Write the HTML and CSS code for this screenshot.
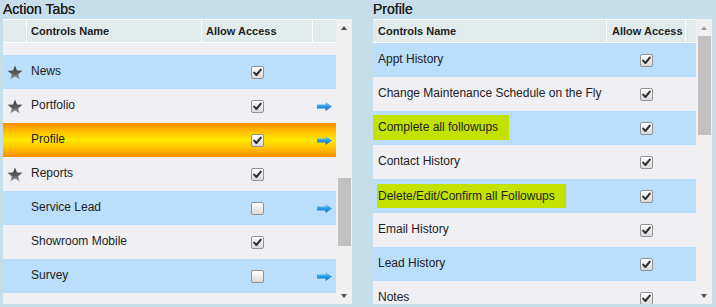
FILE: index.html
```html
<!DOCTYPE html>
<html lang="en">
<head>
  <meta charset="UTF-8">
  <title>Action Tabs - Profile Access</title>
  <link rel="stylesheet" href="styles.css">
</head>
<body>
  <svg width="0" height="0" class="defs">
    <defs>
      <linearGradient id="starGrad" x1="0" y1="0" x2="0" y2="1">
        <stop offset="0" stop-color="#3f3f3f"/>
        <stop offset="0.55" stop-color="#5a5a5a"/>
        <stop offset="1" stop-color="#a9a9a9"/>
      </linearGradient>
      <linearGradient id="arrowGrad" x1="0" y1="0" x2="0" y2="1">
        <stop offset="0" stop-color="#8fd0f8"/>
        <stop offset="0.5" stop-color="#2a9be8"/>
        <stop offset="1" stop-color="#0f62b8"/>
      </linearGradient>
      <symbol id="star" viewBox="0 0 16 15">
        <path d="M8 0.5 L10 5.6 L15.5 5.8 L11.2 9.2 L12.7 14.5 L8 11.5 L3.3 14.5 L4.8 9.2 L0.5 5.8 L6 5.6 Z" fill="url(#starGrad)"/>
      </symbol>
      <symbol id="arrow" viewBox="0 0 15 9">
        <path d="M0 2.6 H8.5 V0 L15 4.5 L8.5 9 V6.4 H0 Z" fill="url(#arrowGrad)"/>
      </symbol>
      <symbol id="tick" viewBox="0 0 13 13">
        <path d="M3.2 6.6 L5.4 9 L9.8 3.6" fill="none" stroke="#333" stroke-width="2.1" stroke-linecap="round" stroke-linejoin="round"/>
      </symbol>
    </defs>
  </svg>

  <div class="page">
    <!-- Action Tabs -->
    <section class="panel panel-left">
      <h2 class="title">Action Tabs</h2>
      <div class="grid">
        <div class="grid-main">
          <div class="head cols-left">
            <div class="hcell"></div>
            <div class="hcell">Controls Name</div>
            <div class="hcell">Allow Access</div>
            <div class="hcell"></div>
          </div>
          <div class="body">
            <div class="spacer"></div>
            <div class="row cols-left blue">
              <div class="cell icon"><svg class="star"><use href="#star"/></svg></div>
              <div class="cell name">News</div>
              <div class="cell chk"><span class="box checked"><svg><use href="#tick"/></svg></span></div>
              <div class="cell icon"></div>
            </div>
            <div class="row cols-left">
              <div class="cell icon"><svg class="star"><use href="#star"/></svg></div>
              <div class="cell name">Portfolio</div>
              <div class="cell chk"><span class="box checked"><svg><use href="#tick"/></svg></span></div>
              <div class="cell icon"><svg class="arrow"><use href="#arrow"/></svg></div>
            </div>
            <div class="row cols-left selected">
              <div class="cell icon"></div>
              <div class="cell name">Profile</div>
              <div class="cell chk"><span class="box checked"><svg><use href="#tick"/></svg></span></div>
              <div class="cell icon"><svg class="arrow"><use href="#arrow"/></svg></div>
            </div>
            <div class="row cols-left">
              <div class="cell icon"><svg class="star"><use href="#star"/></svg></div>
              <div class="cell name">Reports</div>
              <div class="cell chk"><span class="box checked"><svg><use href="#tick"/></svg></span></div>
              <div class="cell icon"></div>
            </div>
            <div class="row cols-left blue">
              <div class="cell icon"></div>
              <div class="cell name">Service Lead</div>
              <div class="cell chk"><span class="box"></span></div>
              <div class="cell icon"><svg class="arrow"><use href="#arrow"/></svg></div>
            </div>
            <div class="row cols-left">
              <div class="cell icon"></div>
              <div class="cell name">Showroom Mobile</div>
              <div class="cell chk"><span class="box checked"><svg><use href="#tick"/></svg></span></div>
              <div class="cell icon"></div>
            </div>
            <div class="row cols-left blue">
              <div class="cell icon"></div>
              <div class="cell name">Survey</div>
              <div class="cell chk"><span class="box"></span></div>
              <div class="cell icon"><svg class="arrow"><use href="#arrow"/></svg></div>
            </div>
            <div class="row cols-left">
              <div class="cell icon"></div>
              <div class="cell name"></div>
              <div class="cell chk"><span class="box"></span></div>
              <div class="cell icon"></div>
            </div>
          </div>
        </div>
        <div class="vscroll">
          <div class="sbtn"><span class="tri up"></span></div>
          <div class="track"><div class="thumb thumb-left"></div></div>
          <div class="sbtn"><span class="tri down"></span></div>
        </div>
      </div>
    </section>

    <!-- Profile -->
    <section class="panel panel-right">
      <h2 class="title">Profile</h2>
      <div class="grid">
        <div class="grid-main">
          <div class="head cols-right">
            <div class="hcell">Controls Name</div>
            <div class="hcell">Allow Access</div>
            <div class="hcell"></div>
          </div>
          <div class="body">
            <div class="row cols-right blue">
              <div class="cell name">Appt History</div>
              <div class="cell chk"><span class="box checked"><svg><use href="#tick"/></svg></span></div>
              <div class="cell"></div>
            </div>
            <div class="row cols-right">
              <div class="cell name">Change Maintenance Schedule on the Fly</div>
              <div class="cell chk"><span class="box checked"><svg><use href="#tick"/></svg></span></div>
              <div class="cell"></div>
            </div>
            <div class="row cols-right blue">
              <div class="cell name"><span class="hl">Complete all followups</span></div>
              <div class="cell chk"><span class="box checked"><svg><use href="#tick"/></svg></span></div>
              <div class="cell"></div>
            </div>
            <div class="row cols-right">
              <div class="cell name">Contact History</div>
              <div class="cell chk"><span class="box checked"><svg><use href="#tick"/></svg></span></div>
              <div class="cell"></div>
            </div>
            <div class="row cols-right blue">
              <div class="cell name"><span class="hl hl-tight">Delete/Edit/Confirm all Followups</span></div>
              <div class="cell chk"><span class="box checked"><svg><use href="#tick"/></svg></span></div>
              <div class="cell"></div>
            </div>
            <div class="row cols-right">
              <div class="cell name">Email History</div>
              <div class="cell chk"><span class="box checked"><svg><use href="#tick"/></svg></span></div>
              <div class="cell"></div>
            </div>
            <div class="row cols-right blue">
              <div class="cell name">Lead History</div>
              <div class="cell chk"><span class="box checked"><svg><use href="#tick"/></svg></span></div>
              <div class="cell"></div>
            </div>
            <div class="row cols-right">
              <div class="cell name">Notes</div>
              <div class="cell chk"><span class="box checked"><svg><use href="#tick"/></svg></span></div>
              <div class="cell"></div>
            </div>
          </div>
        </div>
        <div class="vscroll">
          <div class="sbtn"><span class="tri up off"></span></div>
          <div class="track"><div class="thumb thumb-right"></div></div>
          <div class="sbtn"><span class="tri down"></span></div>
        </div>
      </div>
    </section>
  </div>
</body>
</html>
```

FILE: styles.css
```css
/* reset */
* { margin: 0; padding: 0; box-sizing: border-box; }
html, body { width: 100%; height: 100%; overflow: hidden; }
body {
  background: #c6deea;
  font-family: "Liberation Sans", Arial, sans-serif;
  color: #222;
}
.defs { position: absolute; }

.page {
  display: flex;
  align-items: flex-start;
}

/* panels */
.panel-left { width: 349px; margin-left: 3px; }
.panel-right { width: 339px; margin-left: 21px; }

.title {
  font-size: 14px;
  font-weight: normal;
  line-height: 19px;
  height: 19px;
  color: #1f1f1f;
  text-shadow: 0 0 0.4px #1f1f1f;
}

.grid {
  display: flex;
  height: 285px;
  background: #f0f0f3;
}
.grid-main {
  flex: 1;
  display: flex;
  flex-direction: column;
  min-width: 0;
}

/* column layouts */
.cols-left { display: grid; grid-template-columns: 24px 175px 111px 23px; }
.cols-right { display: grid; grid-template-columns: 234px 79px 10px; }

/* header */
.head {
  height: 24px;
  background: #e1ebeb;
  border-top: 1px solid #fff;
  border-bottom: 1px solid #fff;
}
.hcell {
  border-right: 1px solid #fff;
  font-size: 11px;
  font-weight: bold;
  line-height: 22px;
  padding-left: 4px;
  white-space: nowrap;
}
.cols-right .hcell { padding-left: 5px; }
.hcell:last-child { border-right: none; }

/* body rows */
.body {
  flex: 1;
  overflow: hidden;
}
.spacer { height: 12px; background: #efeff4; }
.row {
  height: 34px;
  background: #efeff4;
  font-size: 12px;
}
.row.blue { background: #bbdefb; }
.row.selected {
  background: linear-gradient(to bottom, #ff8c00 0%, #ffc400 28%, #ffe900 50%, #ffc400 72%, #ff8c00 100%);
}

.cell {
  display: flex;
  align-items: center;
  padding-bottom: 2px;
}
.cell.name {
  padding-left: 4px;
  white-space: nowrap;
}
.cols-right .cell.name { padding-left: 5px; }
.cell.chk, .cell.icon { justify-content: center; padding-bottom: 0; }

.star { width: 16px; height: 15px; margin-left: -1px; }
.arrow { width: 15px; height: 9px; margin-left: -1px; }

/* checkbox */
.box {
  width: 13px;
  height: 13px;
  border: 1px solid #939393;
  border-radius: 2px;
  background: linear-gradient(#ffffff, #dadada);
  display: flex;
  align-items: center;
  justify-content: center;
  margin-left: -1px;
}
.box svg { width: 13px; height: 13px; flex: none; }

/* yellow-green highlight */
.hl {
  display: inline-block;
  background: #c3e200;
  line-height: 25px;
  padding: 0 11px 0 6px;
  margin-left: -6px;
}
.hl-tight {
  line-height: 24px;
  padding-left: 1px;
  margin-left: -1px;
  margin-top: 2px;
}

/* scrollbar */
.vscroll {
  width: 16px;
  display: flex;
  flex-direction: column;
  background: #f0f0f0;
}
.sbtn {
  height: 17px;
  display: flex;
  align-items: center;
  justify-content: center;
}
.track { flex: 1; }
.thumb {
  width: 13px;
  margin-left: 2px;
  background: #c1c1c1;
}
.thumb-left { margin-top: 142px; height: 68px; }
.thumb-right { margin-top: 0; height: 99px; }

.tri {
  width: 0;
  height: 0;
  border-left: 3.5px solid transparent;
  border-right: 3.5px solid transparent;
}
.tri.up { border-bottom: 4px solid #505050; }
.tri.down { border-top: 4px solid #505050; }
.tri.up.off { border-bottom-color: #a3a3a3; }
```
